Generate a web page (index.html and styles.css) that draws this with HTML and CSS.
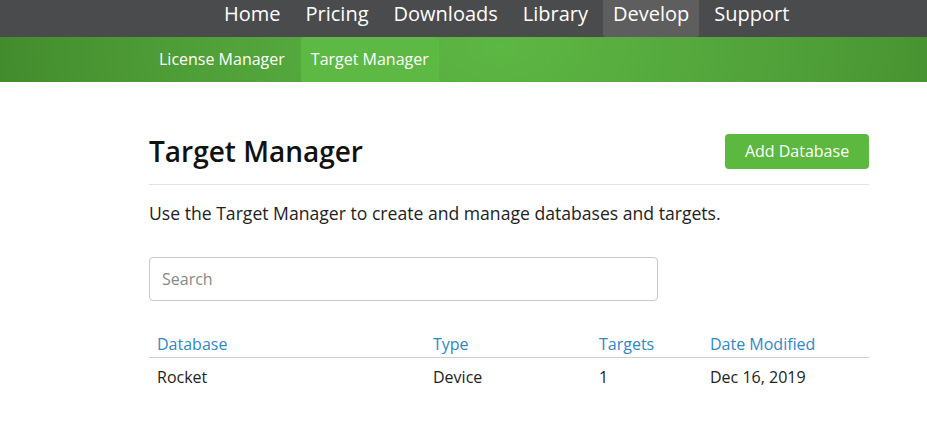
FILE: index.html
```html
<!DOCTYPE html>
<html lang="en">
<head>
<meta charset="utf-8">
<title>Target Manager</title>
<link rel="stylesheet" href="styles.css">
</head>
<body>
<header>
  <nav class="topnav">
    <a href="#">Home</a>
    <a href="#">Pricing</a>
    <a href="#">Downloads</a>
    <a href="#">Library</a>
    <a href="#" class="active">Develop</a>
    <a href="#">Support</a>
  </nav>
  <nav class="subnav">
    <a href="#">License Manager</a>
    <a href="#" class="active">Target Manager</a>
  </nav>
</header>
<main class="container">
  <div class="title-row">
    <h1>Target Manager</h1>
    <button class="btn">Add Database</button>
  </div>
  <p class="lead">Use the Target Manager to create and manage databases and targets.</p>
  <input class="search" type="text" placeholder="Search">
  <table class="db-table">
    <thead>
      <tr><th class="c1">Database</th><th class="c2">Type</th><th class="c3">Targets</th><th class="c4">Date Modified</th></tr>
    </thead>
    <tbody>
      <tr><td>Rocket</td><td>Device</td><td>1</td><td>Dec 16, 2019</td></tr>
    </tbody>
  </table>
</main>
</body>
</html>
```
FILE: styles.css
```css
html, body {
  margin: 0;
  padding: 0;
  background: #fff;
  font-family: "Open Sans", "Liberation Sans", sans-serif;
  color: #222;
}
a { text-decoration: none; }

.topnav {
  background: #4a4b4d;
  height: 37px;
  display: flex;
  padding-left: 214px;
  gap: 5px;
}
.topnav a {
  color: #fff;
  font-size: 20px;
  line-height: 28px;
  padding: 0 10px;
  height: 37px;
  box-sizing: border-box;
  border-radius: 0 0 3px 3px;
}
.topnav a.active { background: #5e5e5f; }

.subnav {
  height: 45px;
  display: flex;
  gap: 6px;
  padding-left: 149px;
  background: radial-gradient(ellipse 520px 300px at 500px 10px, #5db743 0%, #4f9f38 60%, #428a2d 100%);
  background-color: #448c2f;
}
.subnav a {
  color: #fff;
  font-size: 16px;
  line-height: 45px;
  padding: 0 10px;
}
.subnav a.active {
  background: #5db944;
  border-radius: 3px 3px 0 0;
}

.container {
  width: 720px;
  margin-left: 149px;
  padding-top: 51px;
}
.title-row {
  display: flex;
  justify-content: space-between;
  align-items: center;
  padding-bottom: 15px;
  border-bottom: 1px solid #e3e3e3;
}
h1 {
  margin: 0;
  font-size: 28px;
  font-weight: 600;
  color: #111;
  line-height: 36px;
}
.btn {
  background: #5db83f;
  color: #fff;
  border: none;
  border-radius: 4px;
  font-family: inherit;
  font-size: 16px;
  height: 35px;
  width: 144px;
  cursor: pointer;
}
.lead {
  font-size: 17.6px;
  margin: 16px 0 0;
  line-height: 24px;
}
.search {
  display: block;
  margin-top: 32px;
  width: 509px;
  height: 44px;
  box-sizing: border-box;
  border: 1px solid #c8c8c8;
  border-radius: 4px;
  padding: 0 12px;
  font-family: inherit;
  font-size: 16px;
  color: #333;
}
.search::placeholder { color: #888; }

.db-table {
  width: 720px;
  margin-top: 31px;
  border-collapse: collapse;
  font-size: 16px;
}
.db-table th {
  text-align: left;
  font-weight: 400;
  color: #2f88c6;
  padding: 0 8px 1px;
  line-height: 24px;
  border-bottom: 1px solid #cfcfcf;
}
.db-table td {
  padding: 7px 8px;
  line-height: 24px;
  color: #222;
}
.c1 { width: 260px; }
.c2 { width: 150px; }
.c3 { width: 95px; }
```
